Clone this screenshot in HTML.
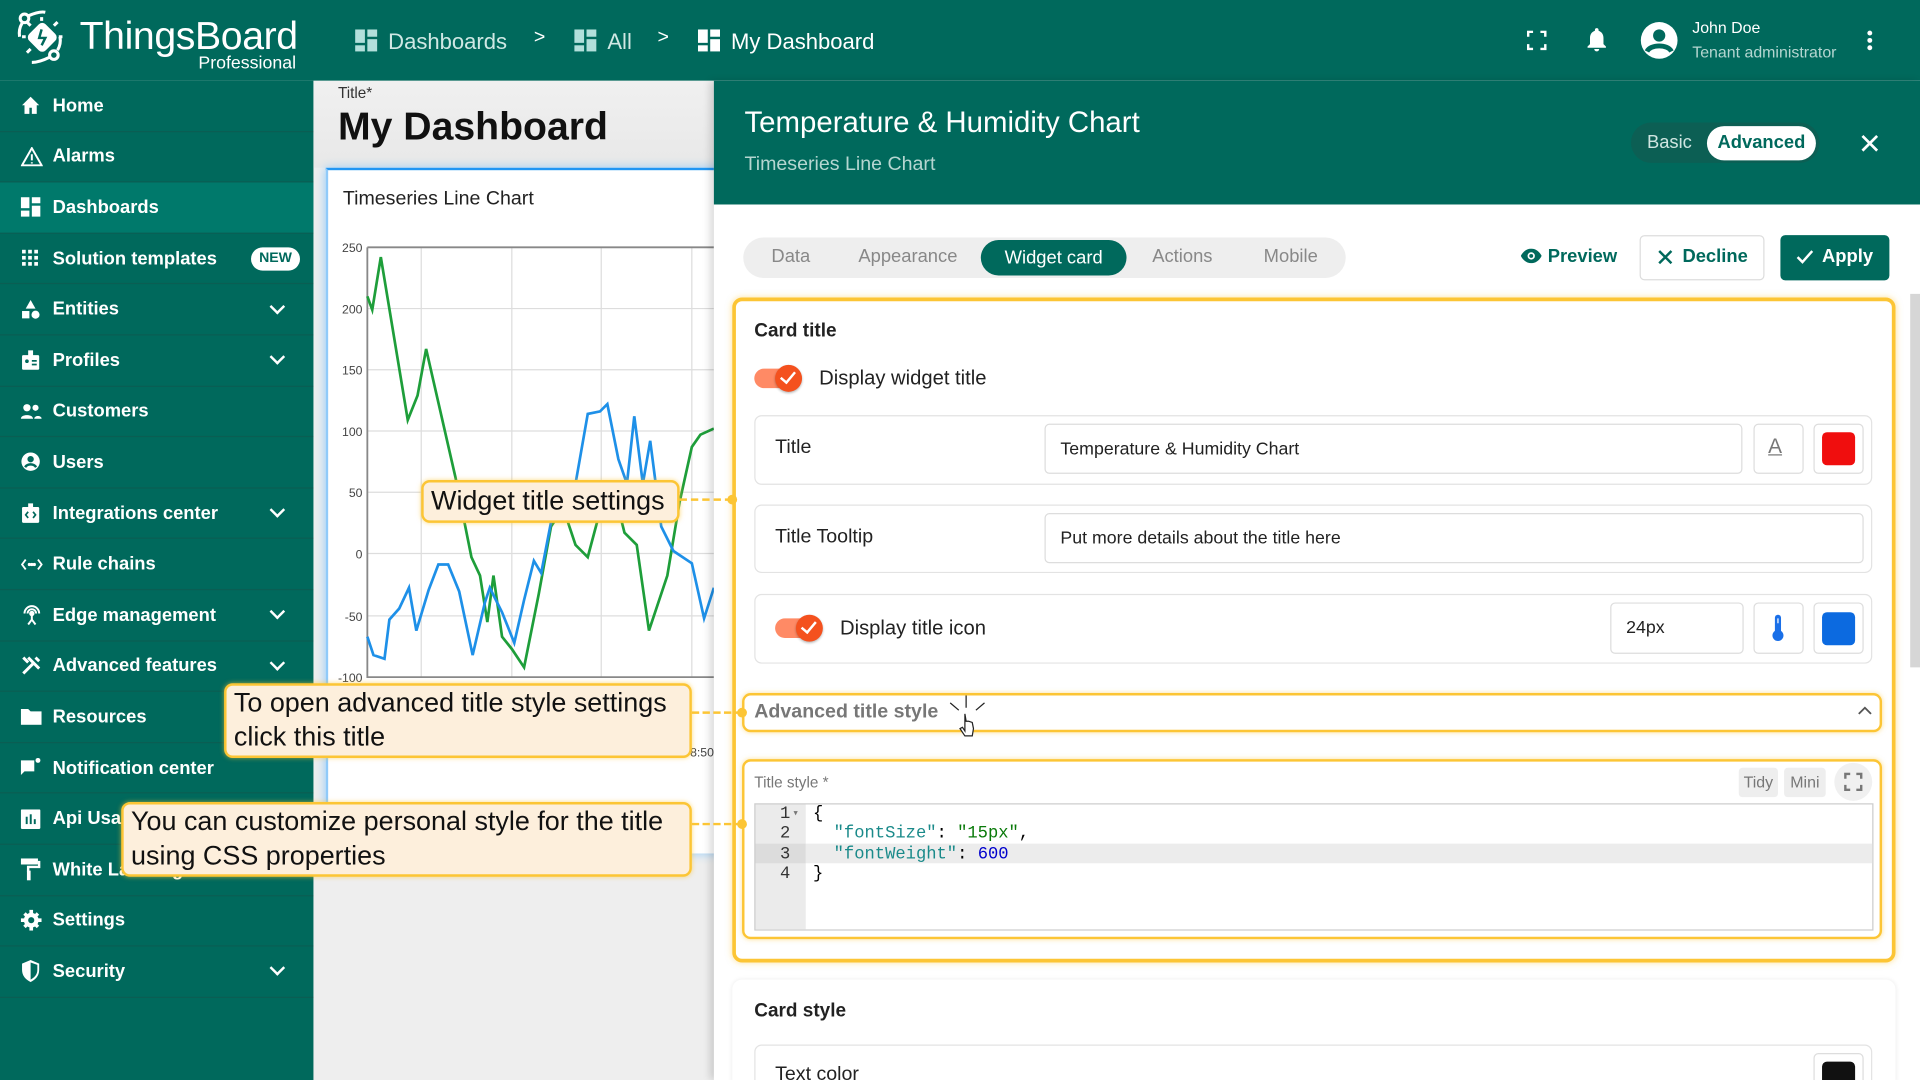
<!DOCTYPE html>
<html><head><meta charset="utf-8">
<style>
*{box-sizing:border-box;margin:0;padding:0}
html,body{width:1920px;height:1080px;overflow:hidden;background:#fff}
#root{position:absolute;left:0;top:0;width:1568px;height:882px;transform:scale(1.22449);transform-origin:0 0;font-family:"Liberation Sans",sans-serif;overflow:hidden;background:#efefef}
.abs{position:absolute}
.top{left:0;top:0;width:1568px;height:66px;background:#00695c}
.side{left:0;top:66px;width:256px;height:816px;background:#00695c}
.item{position:absolute;left:0;width:256px;height:41.6px;border-bottom:1px solid #0a5e53;color:#fff;font-size:15px;font-weight:bold;display:flex;align-items:center}
.item svg{position:absolute;left:17px}
.item span{position:absolute;left:43px}
.item .chev{position:absolute;left:222px;width:9px;height:9px;border-right:2.4px solid #fff;border-bottom:2.4px solid #fff;transform:rotate(45deg);margin-top:-5px}
.crumb{color:#fff;font-size:18px}
.btn{position:absolute;border:1px solid #ddd;border-radius:4px;background:#fff}
.row{position:absolute;left:616px;width:913px;border:1px solid #e3e3e3;border-radius:6px;background:#fff}
.inp{position:absolute;border:1px solid #ddd;border-radius:4px;background:#fff;font-size:14.5px;color:#222;padding-left:12px;display:flex;align-items:center}
.tog{position:absolute;width:36px;height:16px;border-radius:8px;background:#ff8a65}
.tog b{position:absolute;right:-3px;top:-3px;width:22px;height:22px;border-radius:50%;background:#f4511e;box-shadow:0 1px 2px rgba(0,0,0,.3)}
.tog b:after{content:"";position:absolute;left:7px;top:3px;width:5px;height:10px;border-right:2px solid #fff;border-bottom:2px solid #fff;transform:rotate(40deg)}
.call{position:absolute;background:#fdefdc;border:2.5px solid #fcc535;border-radius:7px;font-size:22px;color:#111;line-height:28px;padding:0 6px;box-shadow:0 0 4px rgba(252,197,53,.6)}
.dash{position:absolute;height:0;border-top:2px dashed #fcc535}
.dot{position:absolute;width:8px;height:8px;border-radius:50%;background:#fcc535}
.mono{font-family:"Liberation Mono",monospace;font-size:14px}
</style></head><body><div id="root">

<!-- top bar -->
<div class="abs top"></div>
<svg class="abs" style="left:10px;top:6px" width="52" height="50" viewBox="0 0 52 50" fill="none" stroke="#fff" stroke-width="2.5">
<circle cx="10" cy="9" r="3.5"/><path d="M13 7 Q22 3 27 4"/><path d="M8 13 Q5 18 6 24"/>
<circle cx="34" cy="39" r="3.5"/><path d="M30 41 Q22 45 16 45"/><path d="M37 35 Q40 30 39 24"/>
<rect x="15" y="15" width="19" height="19" rx="4" fill="#fff" stroke="none" transform="rotate(45 24.5 24.5)"/>
<path d="M24 18 L22 25 L27 25 L24 31" stroke="#00695c" stroke-width="2"/>
<path d="M15 15 l-3-3 M34 15 l3-3 M15 34 l-3 3 M11 24h-3 M38 24h3 M24 11v-3" />
</svg>
<div class="abs" style="left:65px;top:11px;color:#fff;font-size:32px;letter-spacing:-.3px">ThingsBoard</div>
<div class="abs" style="left:162px;top:44px;color:#fff;font-size:14.5px">Professional</div>

<svg class="abs" style="left:290px;top:24px" width="20" height="20"><rect x="0" y="0" width="8" height="11" fill="#b2dfdb"/><rect x="10" y="0" width="8" height="6" fill="#b2dfdb"/><rect x="0" y="13" width="8" height="5" fill="#b2dfdb"/><rect x="10" y="8" width="8" height="10" fill="#b2dfdb"/></svg>
<div class="abs crumb" style="left:317px;top:24px;color:#cfe8e4">Dashboards</div>
<div class="abs crumb" style="left:436px;top:22px;font-size:16px">&gt;</div>
<svg class="abs" style="left:469px;top:24px" width="20" height="20"><rect x="0" y="0" width="8" height="11" fill="#b2dfdb"/><rect x="10" y="0" width="8" height="6" fill="#b2dfdb"/><rect x="0" y="13" width="8" height="5" fill="#b2dfdb"/><rect x="10" y="8" width="8" height="10" fill="#b2dfdb"/></svg>
<div class="abs crumb" style="left:496px;top:24px;color:#cfe8e4">All</div>
<div class="abs crumb" style="left:537px;top:22px;font-size:16px">&gt;</div>
<svg class="abs" style="left:570px;top:24px" width="20" height="20"><rect x="0" y="0" width="8" height="11" fill="#fff"/><rect x="10" y="0" width="8" height="6" fill="#fff"/><rect x="0" y="13" width="8" height="5" fill="#fff"/><rect x="10" y="8" width="8" height="10" fill="#fff"/></svg>
<div class="abs crumb" style="left:597px;top:24px">My Dashboard</div>

<svg class="abs" style="left:1247px;top:25px" width="16" height="16" fill="none" stroke="#fff" stroke-width="2"><path d="M1 5V1h4M11 1h4v4M15 11v4h-4M5 15H1v-4"/></svg>
<svg class="abs" style="left:1295px;top:22px" width="18" height="22" fill="#fff"><path d="M9 1c1 0 1.5.7 1.5 1.5v.6C13 4 14.5 6 14.5 9v5l2 2v1h-15v-1l2-2V9c0-3 1.5-5 4-5.9v-.6C7.5 1.7 8 1 9 1zM7 18h4a2 2 0 0 1-4 0z"/></svg>
<svg class="abs" style="left:1339px;top:17px" width="32" height="32"><circle cx="16" cy="16" r="15" fill="#fff"/><circle cx="16" cy="12" r="5" fill="#00695c"/><path d="M6 25c3-6 17-6 20 0" stroke="#00695c" stroke-width="4" fill="none"/></svg>
<div class="abs" style="left:1382px;top:15px;color:#fff;font-size:13px">John Doe</div>
<div class="abs" style="left:1382px;top:35px;color:#b5d6d1;font-size:13px">Tenant administrator</div>
<svg class="abs" style="left:1523px;top:24px" width="8" height="18" fill="#fff"><circle cx="4" cy="3" r="2"/><circle cx="4" cy="9" r="2"/><circle cx="4" cy="15" r="2"/></svg>

<!-- sidebar -->
<div class="abs side">
<div class="item" style="top:0"><svg width="16" height="16" fill="#fff"><path d="M8 1L1 8h2v7h4v-5h2v5h4V8h2z"/></svg><span>Home</span></div>
<div class="item" style="top:41.6px"><svg width="18" height="16" fill="none" stroke="#fff" stroke-width="1.6"><path d="M9 1L1 15h16z M9 6v5 M9 12.5v1"/></svg><span>Alarms</span></div>
<div class="item" style="top:83.2px;background:#00796b"><svg width="16" height="16" fill="#fff"><rect x="0" y="0" width="7" height="9"/><rect x="9" y="0" width="7" height="5"/><rect x="0" y="11" width="7" height="5"/><rect x="9" y="7" width="7" height="9"/></svg><span>Dashboards</span></div>
<div class="item" style="top:124.8px"><svg width="16" height="16" fill="#fff"><rect x="1" y="1" width="3" height="3"/><rect x="6" y="1" width="3" height="3"/><rect x="11" y="1" width="3" height="3"/><rect x="1" y="6" width="3" height="3"/><rect x="6" y="6" width="3" height="3"/><rect x="11" y="6" width="3" height="3"/><rect x="1" y="11" width="3" height="3"/><rect x="6" y="11" width="3" height="3"/><rect x="11" y="11" width="3" height="3"/></svg><span>Solution templates</span>
<div style="position:absolute;left:205px;top:11px;width:40px;height:19px;border-radius:10px;background:#fff;color:#00695c;font-size:11.5px;text-align:center;line-height:19px">NEW</div></div>
<div class="item" style="top:166.4px"><svg width="16" height="16" fill="#fff"><path d="M8 0l4 7H4z"/><rect x="1" y="9" width="6" height="6"/><circle cx="12" cy="12" r="3.3"/></svg><span>Entities</span><i class="chev"></i></div>
<div class="item" style="top:208px"><svg width="16" height="17" fill="#fff"><rect x="1" y="4" width="14" height="12" rx="1"/><rect x="6" y="0" width="4" height="5" fill="#fff"/><circle cx="5" cy="9" r="1.5" fill="#00695c"/><rect x="9" y="8" width="4" height="1.4" fill="#00695c"/><rect x="9" y="11" width="4" height="1.4" fill="#00695c"/></svg><span>Profiles</span><i class="chev"></i></div>
<div class="item" style="top:249.6px"><svg width="17" height="14" fill="#fff"><circle cx="5" cy="4" r="3"/><circle cx="12" cy="4" r="2.5"/><path d="M0 13c0-4 10-4 10 0zM11 13c0-3 6-3 6 0z"/></svg><span>Customers</span></div>
<div class="item" style="top:291.2px"><svg width="16" height="16"><circle cx="8" cy="8" r="7.5" fill="#fff"/><circle cx="8" cy="6" r="2.6" fill="#00695c"/><path d="M3.5 12.5c2-3 7-3 9 0" stroke="#00695c" stroke-width="2" fill="none"/></svg><span>Users</span></div>
<div class="item" style="top:332.8px"><svg width="16" height="17" fill="#fff"><rect x="1" y="3" width="14" height="13" rx="1"/><rect x="6" y="0" width="4" height="4"/><path d="M6 7l-2 2.5 2 2.5M10 7l2 2.5-2 2.5" stroke="#00695c" stroke-width="1.4" fill="none"/></svg><span>Integrations center</span><i class="chev"></i></div>
<div class="item" style="top:374.4px"><svg width="18" height="12" fill="none" stroke="#fff" stroke-width="1.5"><path d="M4 2L1 6l3 4M14 2l3 4-3 4"/><circle cx="7" cy="6" r=".6" fill="#fff"/><circle cx="9" cy="6" r=".6" fill="#fff"/><circle cx="11" cy="6" r=".6" fill="#fff"/></svg><span>Rule chains</span></div>
<div class="item" style="top:416px"><svg width="18" height="18" fill="none" stroke="#fff" stroke-width="1.6"><path d="M3 8a6 6 0 0 1 12 0M5.5 8a3.5 3.5 0 0 1 7 0"/><circle cx="9" cy="8" r="1.4" fill="#fff"/><path d="M9 9v4M6 17l3-4 3 4"/></svg><span>Edge management</span><i class="chev"></i></div>
<div class="item" style="top:457.6px"><svg width="17" height="17" fill="none" stroke="#fff" stroke-width="2.4"><path d="M2 15L11 6M6 2l9 9M12 2l3 3M2 2l4 4"/></svg><span>Advanced features</span><i class="chev"></i></div>
<div class="item" style="top:499.2px"><svg width="17" height="14" fill="#fff"><path d="M0 1h6l2 2h9v11H0z"/></svg><span>Resources</span></div>
<div class="item" style="top:540.8px"><svg width="17" height="17" fill="#fff"><path d="M0 2h11v9H3l-3 3z"/><circle cx="14" cy="2" r="2"/></svg><span>Notification center</span></div>
<div class="item" style="top:582.4px"><svg width="16" height="16" fill="#fff"><rect x="0" y="0" width="16" height="16" rx="1"/><rect x="4" y="6" width="1.6" height="6" fill="#00695c"/><rect x="7.3" y="4" width="1.6" height="8" fill="#00695c"/><rect x="10.6" y="8" width="1.6" height="4" fill="#00695c"/></svg><span>Api Usage</span></div>
<div class="item" style="top:624px"><svg width="16" height="18" fill="#fff"><rect x="0" y="0" width="14" height="5"/><path d="M14 2h2v6H7v3h-2v-5h9z"/><rect x="5" y="10" width="3" height="8"/></svg><span>White Labeling</span></div>
<div class="item" style="top:665.6px"><svg width="17" height="17" fill="#fff"><circle cx="8.5" cy="8.5" r="6"/><path d="M7 0h3v3H7zM7 14h3v3H7zM0 7h3v3H0zM14 7h3v3h-3z"/><path d="M2 4l2-2 2 2-2 2zM11 13l2-2 2 2-2 2zM2 13l2 2 2-2-2-2zM11 4l2-2 2 2-2 2z"/><circle cx="8.5" cy="8.5" r="2.5" fill="#00695c"/></svg><span>Settings</span></div>
<div class="item" style="top:707.2px"><svg width="16" height="18" fill="#fff"><path d="M8 0l7 3v5c0 5-3 8-7 10-4-2-7-5-7-10V3z"/><path d="M8 2v14c3-1.5 5.5-4 5.5-8V4z" fill="#00695c"/></svg><span>Security</span><i class="chev"></i></div>
</div>

<!-- dashboard area -->
<div class="abs" style="left:256px;top:66px;width:327px;height:816px;background:#eee"></div>
<div class="abs" style="left:256px;top:66px;width:327px;height:71px;background:linear-gradient(#f0f0f0,#e8e8e8)"></div>
<div class="abs" style="left:276px;top:69px;font-size:12.5px;color:#333">Title*</div>
<div class="abs" style="left:276px;top:85px;font-size:32px;font-weight:bold;color:#111">My Dashboard</div>
<div class="abs" style="left:266px;top:137px;width:330px;height:560px;background:#fff;border-top:2px solid #2196f3;border-left:2px solid #90caf9;box-shadow:0 0 8px #90caf9"></div>
<div class="abs" style="left:280px;top:154px;font-size:16px;color:#222">Timeseries Line Chart</div>
<svg class="abs" style="left:266px;top:190px" width="320" height="440" viewBox="266 190 320 440">
<g stroke="#ddd" stroke-width="1">
<path d="M300 252H583M300 302H583M300 352H583M300 402H583M300 452H583M300 503H583"/>
<path d="M344 202V553M418 202V553M491 202V553M565 202V553"/>
</g>
<path d="M300 202H583M300 202V553H583" stroke="#888" stroke-width="1.5" fill="none"/>
<g font-size="10" fill="#444" text-anchor="end" font-family="Liberation Sans">
<text x="296" y="206">250</text><text x="296" y="256">200</text><text x="296" y="306">150</text><text x="296" y="356">100</text><text x="296" y="406">50</text><text x="296" y="456">0</text><text x="296" y="507">-50</text><text x="296" y="557">-100</text>
<text x="583" y="618">8:50</text></g>
<polyline fill="none" stroke="#1e9e3a" stroke-width="2.2" points="300,242 304,253 311,210 333,343 341,323 348,285 372,390 385,455 392,470 398,508 403,470 410,520 418,530 428,545 440,485 450,430 460,415 470,445 480,455 492,410 500,395 510,435 520,445 530,515 545,470 555,410 565,365 572,355 583,350"/>
<polyline fill="none" stroke="#1e90e8" stroke-width="2.2" points="300,520 305,535 314,538 318,506 326,497 334,480 340,515 350,482 358,461 366,461 375,483 386,535 396,492 400,480 410,500 420,525 428,490 436,458 442,468 452,416 464,412 470,395 480,338 490,336 496,330 505,375 512,395 518,340 525,395 531,360 540,430 550,450 565,460 575,505 583,480"/>
</svg>

<!-- right panel -->
<div class="abs" style="left:583px;top:66px;width:985px;height:816px;background:#fff;box-shadow:-3px 0 6px rgba(0,0,0,.15)"></div>
<div class="abs" style="left:583px;top:66px;width:985px;height:101px;background:#00695c"></div>
<div class="abs" style="left:608px;top:87px;color:#fff;font-size:24px">Temperature &amp; Humidity Chart</div>
<div class="abs" style="left:608px;top:126px;color:#b5d6d1;font-size:16px">Timeseries Line Chart</div>
<div class="abs" style="left:1332px;top:100px;width:154px;height:33px;border-radius:17px;background:#0c5f54"></div>
<div class="abs" style="left:1345px;top:108px;color:#d0e5e1;font-size:15px">Basic</div>
<div class="abs" style="left:1394px;top:103px;width:89px;height:28px;border-radius:14px;background:#fff;color:#00695c;font-size:15px;font-weight:bold;text-align:center;line-height:28px">Advanced</div>
<svg class="abs" style="left:1519px;top:109px" width="16" height="16" stroke="#fff" stroke-width="2.2"><path d="M2 2l12 12M14 2L2 14"/></svg>

<div class="abs" style="left:607px;top:194px;width:492px;height:33px;border-radius:17px;background:#eee"></div>
<div class="abs" style="left:630px;top:201px;color:#888;font-size:15px">Data</div>
<div class="abs" style="left:701px;top:201px;color:#888;font-size:15px">Appearance</div>
<div class="abs" style="left:801px;top:196px;width:119px;height:29px;border-radius:15px;background:#00695c;color:#fff;font-size:15px;text-align:center;line-height:29px">Widget card</div>
<div class="abs" style="left:941px;top:201px;color:#888;font-size:15px">Actions</div>
<div class="abs" style="left:1032px;top:201px;color:#888;font-size:15px">Mobile</div>
<svg class="abs" style="left:1242px;top:203px" width="17" height="12"><path d="M0 6c4-8 13-8 17 0-4 8-13 8-17 0z" fill="#00695c"/><circle cx="8.5" cy="6" r="3" fill="#fff"/><circle cx="8.5" cy="6" r="1.6" fill="#00695c"/></svg>
<div class="abs" style="left:1264px;top:201px;color:#00695c;font-size:15px;font-weight:bold">Preview</div>
<div class="btn" style="left:1339px;top:192px;width:102px;height:37px"></div>
<svg class="abs" style="left:1354px;top:204px" width="12" height="12" stroke="#00695c" stroke-width="2"><path d="M1 1l10 10M11 1L1 11"/></svg>
<div class="abs" style="left:1374px;top:201px;color:#00695c;font-size:15px;font-weight:bold">Decline</div>
<div class="abs" style="left:1454px;top:192px;width:89px;height:37px;background:#00695c;border-radius:4px"></div>
<svg class="abs" style="left:1467px;top:204px" width="14" height="12" stroke="#fff" stroke-width="2" fill="none"><path d="M1 6l4 4 8-9"/></svg>
<div class="abs" style="left:1488px;top:201px;color:#fff;font-size:15px;font-weight:bold">Apply</div>

<!-- orange outer -->
<div class="abs" style="left:598px;top:243px;width:950px;height:543px;border:3px solid #fcc535;border-radius:8px;box-shadow:0 0 5px rgba(252,197,53,.5)"></div>
<div class="abs" style="left:616px;top:262px;font-size:15.5px;font-weight:bold;color:#222">Card title</div>
<div class="tog" style="left:616px;top:301px"><b></b></div>
<div class="abs" style="left:669px;top:300px;font-size:16.5px;color:#222">Display widget title</div>

<div class="row" style="top:339px;height:57px"></div>
<div class="abs" style="left:633px;top:357px;font-size:16px;color:#222">Title</div>
<div class="inp" style="left:853px;top:346px;width:570px;height:41px">Temperature &amp; Humidity Chart</div>
<div class="btn" style="left:1432px;top:346px;width:41px;height:41px"></div>
<div class="abs" style="left:1444px;top:355px;font-size:17px;color:#777;text-decoration:underline">A</div>
<div class="btn" style="left:1481px;top:346px;width:41px;height:41px"></div>
<div class="abs" style="left:1488px;top:353px;width:27px;height:27px;border-radius:4px;background:#f00e0e"></div>

<div class="row" style="top:412px;height:56px"></div>
<div class="abs" style="left:633px;top:430px;font-size:16px;color:#222">Title Tooltip</div>
<div class="inp" style="left:853px;top:419px;width:669px;height:41px">Put more details about the title here</div>

<div class="row" style="top:485px;height:57px"></div>
<div class="tog" style="left:633px;top:505px"><b></b></div>
<div class="abs" style="left:686px;top:504px;font-size:16.5px;color:#222">Display title icon</div>
<div class="inp" style="left:1315px;top:492px;width:109px;height:42px">24px</div>
<div class="btn" style="left:1432px;top:492px;width:41px;height:42px"></div>
<svg class="abs" style="left:1446px;top:501px" width="12" height="24"><rect x="3.5" y="1" width="5" height="16" rx="2.5" fill="#1a6fe8"/><circle cx="6" cy="18" r="4.5" fill="#1a6fe8"/><path d="M6 4v4" stroke="#fff" stroke-width="1"/></svg>
<div class="btn" style="left:1481px;top:492px;width:41px;height:42px"></div>
<div class="abs" style="left:1488px;top:500px;width:27px;height:27px;border-radius:4px;background:#0c6ae0"></div>

<div class="abs" style="left:606px;top:566px;width:931px;height:32px;border:2.5px solid #fcc535;border-radius:7px;box-shadow:0 0 4px rgba(252,197,53,.5)"></div>
<div class="abs" style="left:616px;top:573px;font-size:16px;font-weight:bold;color:#777">Advanced title style</div>
<svg class="abs" style="left:1516px;top:575px" width="14" height="10" stroke="#555" stroke-width="1.5" fill="none"><path d="M2 8l5-5 5 5"/></svg>
<svg class="abs" style="left:772px;top:566px" width="36" height="40" fill="none" stroke="#222" stroke-width="1"><path d="M17 2v10M4 8l7 6M32 8l-7 6"/><path d="M16 17v14l-2-3-2 1 4 6h6l1-6-1-5-3-1-2 0z" fill="#fff"/></svg>

<div class="abs" style="left:606px;top:620px;width:931px;height:147px;border:2.5px solid #fcc535;border-radius:7px;box-shadow:0 0 4px rgba(252,197,53,.5)"></div>
<div class="abs" style="left:616px;top:632px;font-size:12.5px;color:#777">Title style *</div>
<div class="abs" style="left:1420px;top:627px;width:32px;height:24px;background:#eee;border-radius:3px;font-size:13px;color:#777;text-align:center;line-height:24px">Tidy</div>
<div class="abs" style="left:1457px;top:627px;width:34px;height:24px;background:#eee;border-radius:3px;font-size:13px;color:#777;text-align:center;line-height:24px">Mini</div>
<div class="abs" style="left:1498px;top:623px;width:31px;height:31px;background:#f0f0f0;border-radius:50%"></div>
<svg class="abs" style="left:1506px;top:631px" width="15" height="15" fill="none" stroke="#777" stroke-width="2"><path d="M1 5V1h4M10 1h4v4M14 10v4h-4M5 14H1v-4"/></svg>
<div class="abs" style="left:616px;top:656px;width:914px;height:104px;border:1px solid #ccc;background:#fff"></div>
<div class="abs" style="left:617px;top:657px;width:41px;height:102px;background:#ebebeb"></div>
<div class="abs" style="left:658px;top:689px;width:871px;height:16px;background:#ececec"></div>
<div class="abs" style="left:617px;top:689px;width:41px;height:16px;background:#dcdcdc"></div>
<div class="abs mono" style="left:637px;top:657px;line-height:16.3px;color:#333">1<br>2<br>3<br>4</div>
<div class="abs" style="left:648px;top:660px;font-size:7px;color:#777">▾</div>
<div class="abs mono" style="left:664px;top:657px;line-height:16.3px;white-space:pre;color:#000">{
  <span style="color:#1a8a8a">"fontSize"</span>: <span style="color:#0a7a0a">"15px"</span>,
  <span style="color:#1a8a8a">"fontWeight"</span>: <span style="color:#0000cd">600</span>
}</div>

<!-- card style -->
<div class="abs" style="left:598px;top:800px;width:950px;height:90px;border-radius:8px;box-shadow:0 0 4px rgba(0,0,0,.08)"></div>
<div class="abs" style="left:616px;top:817px;font-size:15.5px;font-weight:bold;color:#222">Card style</div>
<div class="row" style="top:853px;height:40px"></div>
<div class="abs" style="left:633px;top:869px;font-size:16px;color:#222">Text color</div>
<div class="btn" style="left:1481px;top:860px;width:41px;height:40px"></div>
<div class="abs" style="left:1488px;top:867px;width:27px;height:27px;border-radius:4px;background:#111"></div>

<div class="abs" style="left:1560px;top:240px;width:8px;height:305px;background:#d6d6d6"></div>

<!-- callouts -->
<div class="call" style="left:344px;top:392px;width:211px;height:35px;line-height:30px">Widget title settings</div>
<div class="dash" style="left:555px;top:407px;width:43px"></div>
<div class="dot" style="left:594px;top:404px"></div>
<div class="call" style="left:183px;top:558px;width:382px;height:61px">To open advanced title style settings<br>click this title</div>
<div class="dash" style="left:565px;top:581px;width:41px"></div>
<div class="dot" style="left:602px;top:578px"></div>
<div class="call" style="left:99px;top:655px;width:466px;height:61px">You can customize personal style for the title<br>using CSS properties</div>
<div class="dash" style="left:565px;top:672px;width:41px"></div>
<div class="dot" style="left:602px;top:669px"></div>

</div></body></html>
